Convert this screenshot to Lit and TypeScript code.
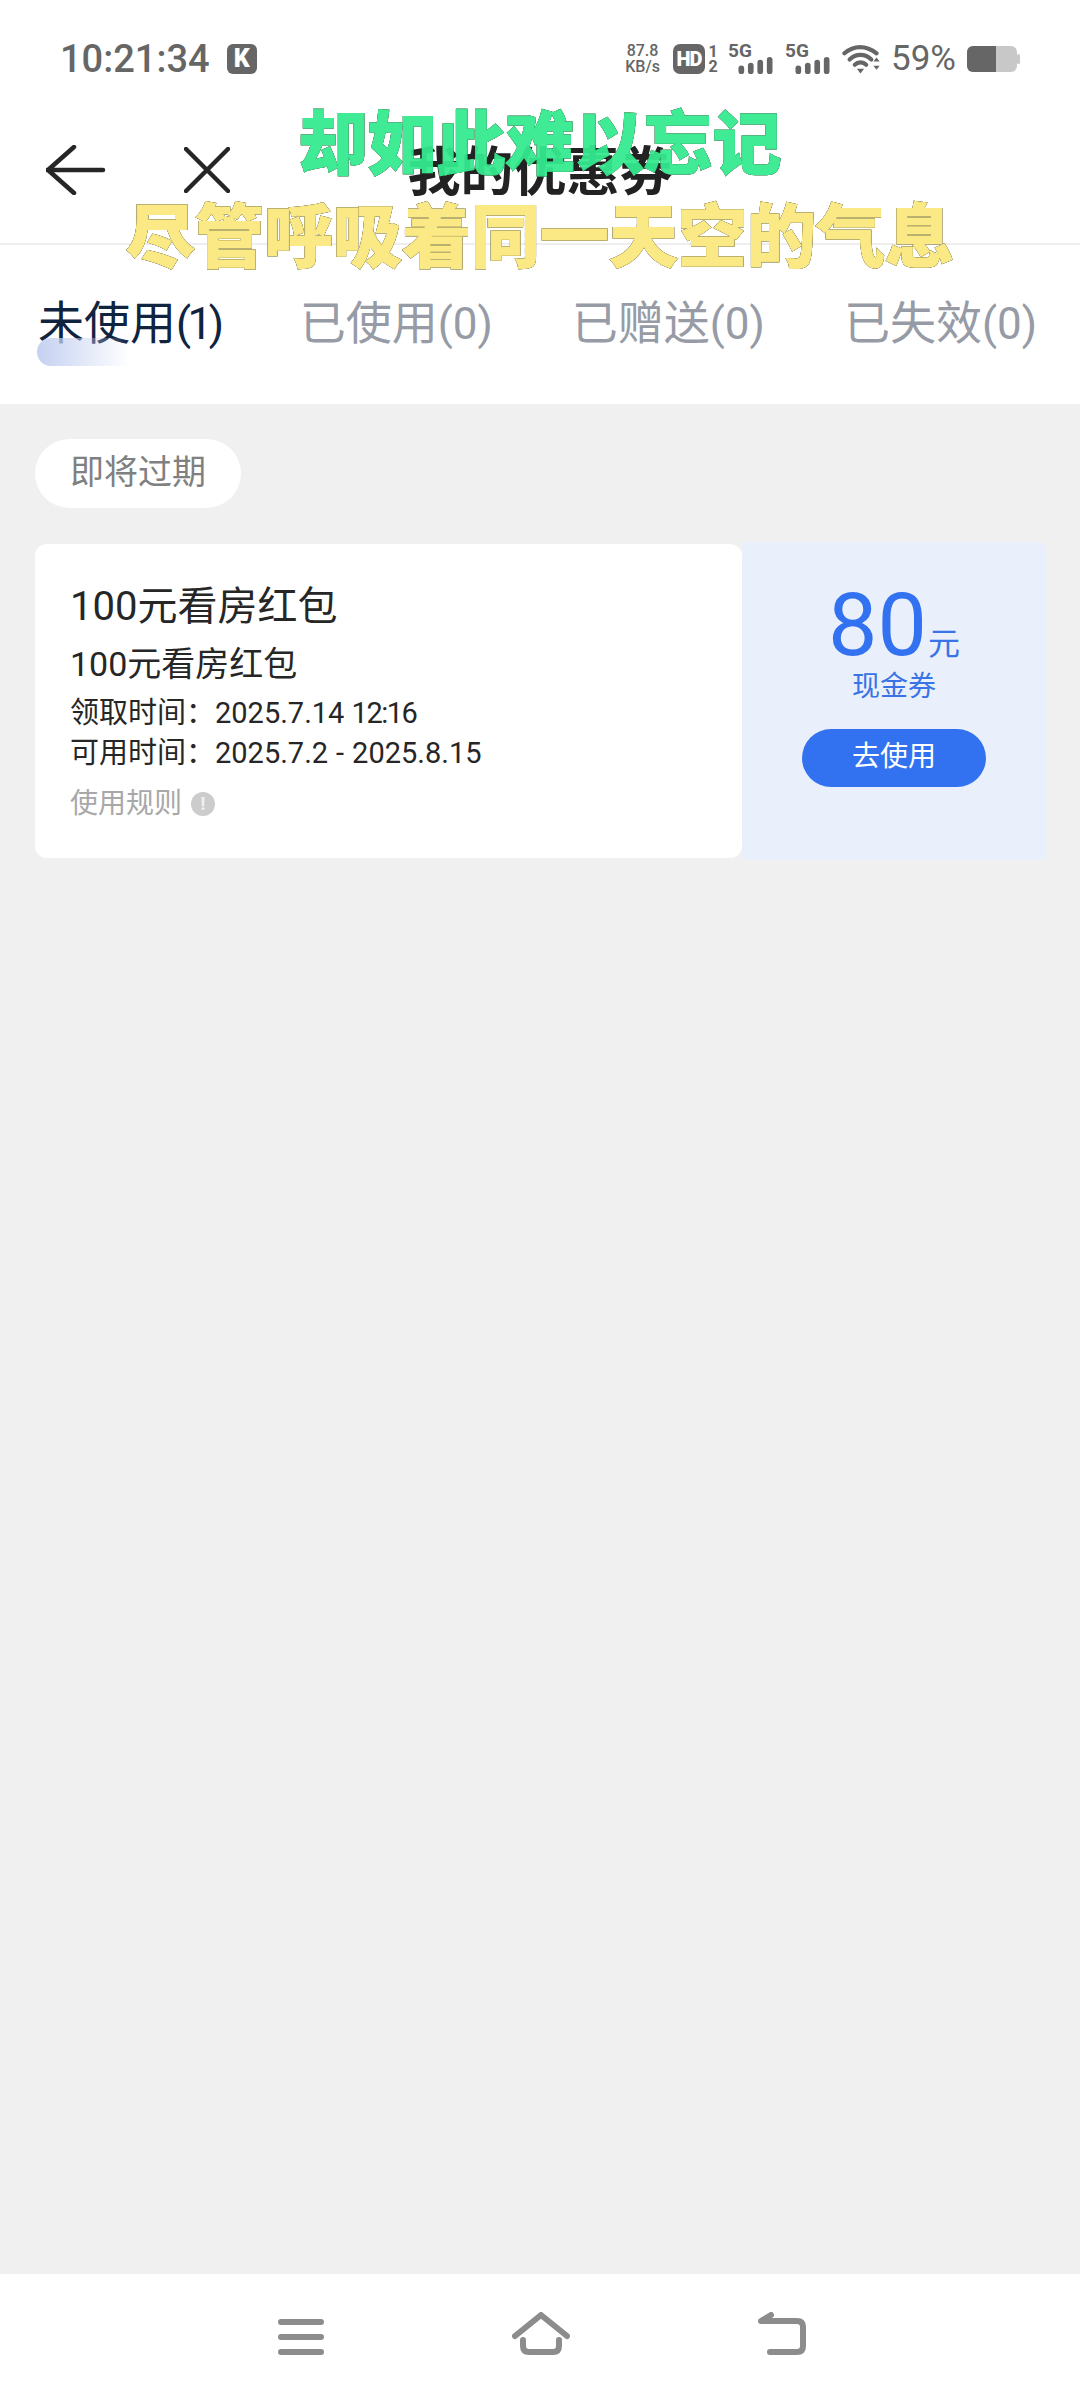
import { LitElement, html, css, svg } from "lit";
import { customElement } from "lit/decorators.js";

const tabs = [
  { name: "未使用", count: 1 },
  { name: "已使用", count: 0 },
  { name: "已赠送", count: 0 },
  { name: "已失效", count: 0 },
];

// four rising signal bars, shared by both SIM slots
const signalBars = svg`
  <rect x="0" y="9" width="6" height="9" rx="3"></rect>
  <rect x="10" y="6" width="6" height="12" rx="3"></rect>
  <rect x="20" y="3" width="6" height="15" rx="3"></rect>
  <rect x="30" y="0" width="6" height="18" rx="3"></rect>
`;

@customElement("app-root")
export class AppRoot extends LitElement {
  static styles = css`
    :host {
      display: block;
      width: 1080px;
      height: 2400px;
      font-family: Roboto, "Noto Sans CJK SC", sans-serif;
      background: #f0f0f0;
    }
    .page {
      position: relative;
      height: 2400px;
      display: flex;
      flex-direction: column;
    }
    .head {
      background: #fff;
    }
    .status {
      height: 118px;
      box-sizing: border-box;
      padding: 0 60px;
      display: flex;
      align-items: center;
      justify-content: space-between;
      color: #666;
    }
    .status-left,
    .status-right {
      display: flex;
      align-items: center;
    }
    .clock {
      font-size: 38px;
      font-weight: 500;
      line-height: 44px;
      margin-right: 17px;
    }
    .k-badge {
      width: 30px;
      height: 30px;
      border-radius: 6px;
      background: #666;
      color: #fff;
      font-size: 25px;
      font-weight: 900;
      line-height: 30px;
      text-align: center;
    }
    .speed {
      width: 41px;
      font-size: 16px;
      font-weight: 500;
      line-height: 16px;
      text-align: center;
      margin-right: 10px;
    }
    .hd {
      width: 32px;
      height: 30px;
      border-radius: 7px;
      background: #666;
      color: #fff;
      font-size: 20px;
      font-weight: 900;
      letter-spacing: -1px;
      line-height: 30px;
      text-align: center;
    }
    .sim {
      width: 12px;
      margin: 0 9px 0 2px;
      font-size: 16px;
      font-weight: 700;
      line-height: 15px;
      text-align: center;
    }
    .net {
      position: relative;
      width: 45px;
      height: 30px;
      margin-right: 12px;
    }
    .net span {
      position: absolute;
      left: 0;
      top: -2px;
      font-size: 19px;
      font-weight: 700;
      line-height: 18px;
    }
    .net svg {
      position: absolute;
      left: 10px;
      bottom: 0;
    }
    .wifi {
      margin-right: 11px;
    }
    .percent {
      font-size: 35px;
      line-height: 40px;
      margin-right: 11px;
    }
    .nav {
      height: 127px;
      box-sizing: border-box;
      padding: 0 0 22px 46px;
      display: flex;
      align-items: center;
      border-bottom: 2px solid #eee;
      position: relative;
    }
    .nav svg {
      fill: none;
      stroke: #262626;
      stroke-width: 4.5;
      stroke-linecap: round;
      stroke-linejoin: round;
    }
    .close-icon {
      margin-left: 78px;
    }
    .title {
      position: absolute;
      left: 0;
      right: 0;
      top: 27px;
      text-align: center;
      font-size: 53px;
      font-weight: 700;
      line-height: 56px;
      color: #222;
    }
    .tabs {
      height: 159px;
      box-sizing: border-box;
      padding: 0 0 0 38px;
      display: flex;
      gap: 79px;
    }
    .tab {
      position: relative;
      margin-top: 52px;
      font-size: 46px;
      line-height: 52px;
      color: #969ba6;
      white-space: nowrap;
    }
    .tab.active {
      color: #10233f;
    }
    .tab b {
      font-weight: 400;
      font-size: 44px;
    }
    .tab.active b {
      letter-spacing: -3.5px;
    }
    .tab i {
      position: absolute;
      left: -1px;
      top: 41px;
      width: 93px;
      height: 28px;
      border-radius: 14px 0 0 14px;
      background: linear-gradient(90deg, #c5d1f2, rgba(226, 233, 250, 0) 100%);
    }
    .body {
      flex: 1;
      padding: 35px 34px 0 35px;
    }
    .chip {
      display: inline-block;
      padding: 0 35px;
      height: 69px;
      border-radius: 35px;
      background: #fff;
      color: #808080;
      font-size: 34px;
      line-height: 67px;
    }
    .coupon {
      display: flex;
      margin-top: 36px;
      height: 314px;
    }
    .coupon-info {
      flex: 1;
      box-sizing: border-box;
      padding: 35px 0 0 35px;
      background: #fff;
      border-radius: 12px;
      color: #262626;
    }
    .coupon-name {
      font-size: 40px;
      line-height: 56px;
    }
    .coupon-sub {
      font-size: 34px;
      line-height: 48px;
      margin: 5px 0 5px;
    }
    .coupon-line {
      font-size: 29px;
      line-height: 40px;
      white-space: pre;
    }
    .dash {
      margin: 0 8px;
    }
    .clock-tight {
      letter-spacing: -1.5px;
    }
    .rule {
      display: flex;
      align-items: center;
      gap: 9px;
      margin-top: 11px;
      font-size: 28px;
      line-height: 40px;
      color: #a8a8a8;
    }
    .rule em {
      width: 24px;
      height: 24px;
      border-radius: 50%;
      background: #cccccc;
      color: #f2f2f2;
      font-size: 18px;
      font-style: normal;
      font-weight: 700;
      line-height: 24px;
      text-align: center;
    }
    .coupon-value {
      width: 304px;
      margin: -2px 0;
      background: #e9f0fc;
      border-radius: 0 6px 6px 0;
      display: flex;
      flex-direction: column;
      align-items: center;
      color: #3a73e6;
    }
    .amount {
      margin-top: 58px;
      font-size: 88px;
      line-height: 50px;
      color: #3272f0;
    }
    .amount span {
      font-size: 32px;
      margin-left: 1px;
      color: #3a73e6;
    }
    .kind {
      font-size: 28px;
      line-height: 36px;
    }
    .use {
      margin-top: 24px;
      width: 184px;
      height: 58px;
      border-radius: 29px;
      background: #3272f0;
      color: #fff;
      font-size: 28px;
      line-height: 56px;
      text-align: center;
    }
    .navbar {
      height: 126px;
      background: #fff;
      display: flex;
      justify-content: center;
      align-items: flex-end;
      gap: 188px;
      padding: 0 0 45px 3px;
      box-sizing: border-box;
    }
    .navbar svg {
      fill: none;
      stroke: #8c8c8c;
      stroke-width: 6;
      stroke-linecap: round;
      stroke-linejoin: round;
    }
    .caption {
      position: absolute;
      left: 0;
      right: 0;
      text-align: center;
      font-size: 69px;
      font-weight: 900;
      line-height: 80px;
      white-space: nowrap;
      filter: drop-shadow(0 0 0.6px rgba(60, 60, 40, 0.9)) drop-shadow(0 0 0.4px rgba(60, 60, 40, 0.7));
    }
    .caption.green {
      top: 106px;
      color: #35ea90;
      -webkit-text-stroke: 1.2px #35ea90;
      opacity: 0.94;
    }
    .caption.yellow {
      top: 199px;
      color: #fbe985;
      -webkit-text-stroke: 1.2px #fbe985;
    }
  `;

  render() {
    return html`
      <div class="page">
        <div class="head">
          <div class="status">
            <div class="status-left">
              <span class="clock">10:21:34</span>
              <span class="k-badge">K</span>
            </div>
            <div class="status-right">
              <div class="speed">87.8<br />KB/s</div>
              <div class="hd">HD</div>
              <div class="sim">1<br />2</div>
              <div class="net">
                <span>5G</span>
                <svg width="35" height="17" viewBox="0 0 36 18" fill="#666">${signalBars}</svg>
              </div>
              <div class="net">
                <span>5G</span>
                <svg width="35" height="17" viewBox="0 0 36 18" fill="#666">${signalBars}</svg>
              </div>
              <svg class="wifi" width="38" height="29" viewBox="0 0 36 28">
                <g fill="none" stroke="#666" stroke-width="4" stroke-linecap="round">
                  <path d="M2 8C11 0 23 0 33 8"></path>
                  <path d="M7 14C13 8 22 8 28 14"></path>
                  <path d="M12 19C15 16 20 16 23 19"></path>
                </g>
                <path d="M14 23h7l-3.500 4.500z" fill="#666"></path>
                <path d="M30 16l3-4 3 4zM30 20l3 4 3-4z" fill="#666"></path>
              </svg>
              <span class="percent">59%</span>
              <svg width="53" height="26" viewBox="0 0 53 26">
                <rect x="0" y="0" width="50" height="26" rx="6" fill="#c8c8c8"></rect>
                <path d="M6 0H29V26H6A6 6 0 0 1 0 20V6A6 6 0 0 1 6 0Z" fill="#666"></path>
                <rect x="50" y="8" width="3" height="10" rx="1.500" fill="#c8c8c8"></rect>
              </svg>
            </div>
          </div>
          <div class="nav">
            <svg width="60" height="50" viewBox="0 0 60 50">
              <path d="M1 25H57M28 2L2 25L28 48"></path>
            </svg>
            <svg class="close-icon" width="46" height="46" viewBox="0 0 46 46">
              <path d="M2 2L44 44M44 2L2 44"></path>
            </svg>
            <div class="title">我的优惠券</div>
          </div>
          <div class="tabs">
            ${tabs.map(
              (t, i) => html`
                <div class="tab ${i === 0 ? "active" : ""}">
                  ${i === 0 ? html`<i></i>` : ""}${t.name}<b>(${t.count})</b>
                </div>
              `
            )}
          </div>
        </div>
        <div class="body">
          <div class="chip">即将过期</div>
          <div class="coupon">
            <div class="coupon-info">
              <div class="coupon-name">100元看房红包</div>
              <div class="coupon-sub">100元看房红包</div>
              <div class="coupon-line">领取时间：2025.7.14 <span class="clock-tight">12:16</span></div>
              <div class="coupon-line">可用时间：2025.7.2<span class="dash">-</span>2025.8.15</div>
              <div class="rule">使用规则<em>!</em></div>
            </div>
            <div class="coupon-value">
              <div class="amount">80<span>元</span></div>
              <div class="kind">现金券</div>
              <div class="use">去使用</div>
            </div>
          </div>
        </div>
        <div class="navbar">
          <svg width="46" height="36" viewBox="0 0 46 36">
            <path d="M3 3H43M3 18H43M3 33H43"></path>
          </svg>
          <svg width="58" height="43" viewBox="0 0 58 43">
            <path d="M3 24L29 3L55 24M11 28V34Q11 40 17 40H41Q47 40 47 34V28"></path>
          </svg>
          <svg width="48" height="43" viewBox="0 0 48 43">
            <path d="M12 40H39Q45 40 45 34V15Q45 9 39 9H3L13 3"></path>
          </svg>
        </div>
        <div class="caption green">却如此难以忘记</div>
        <div class="caption yellow">尽管呼吸着同一天空的气息</div>
      </div>
    `;
  }
}
